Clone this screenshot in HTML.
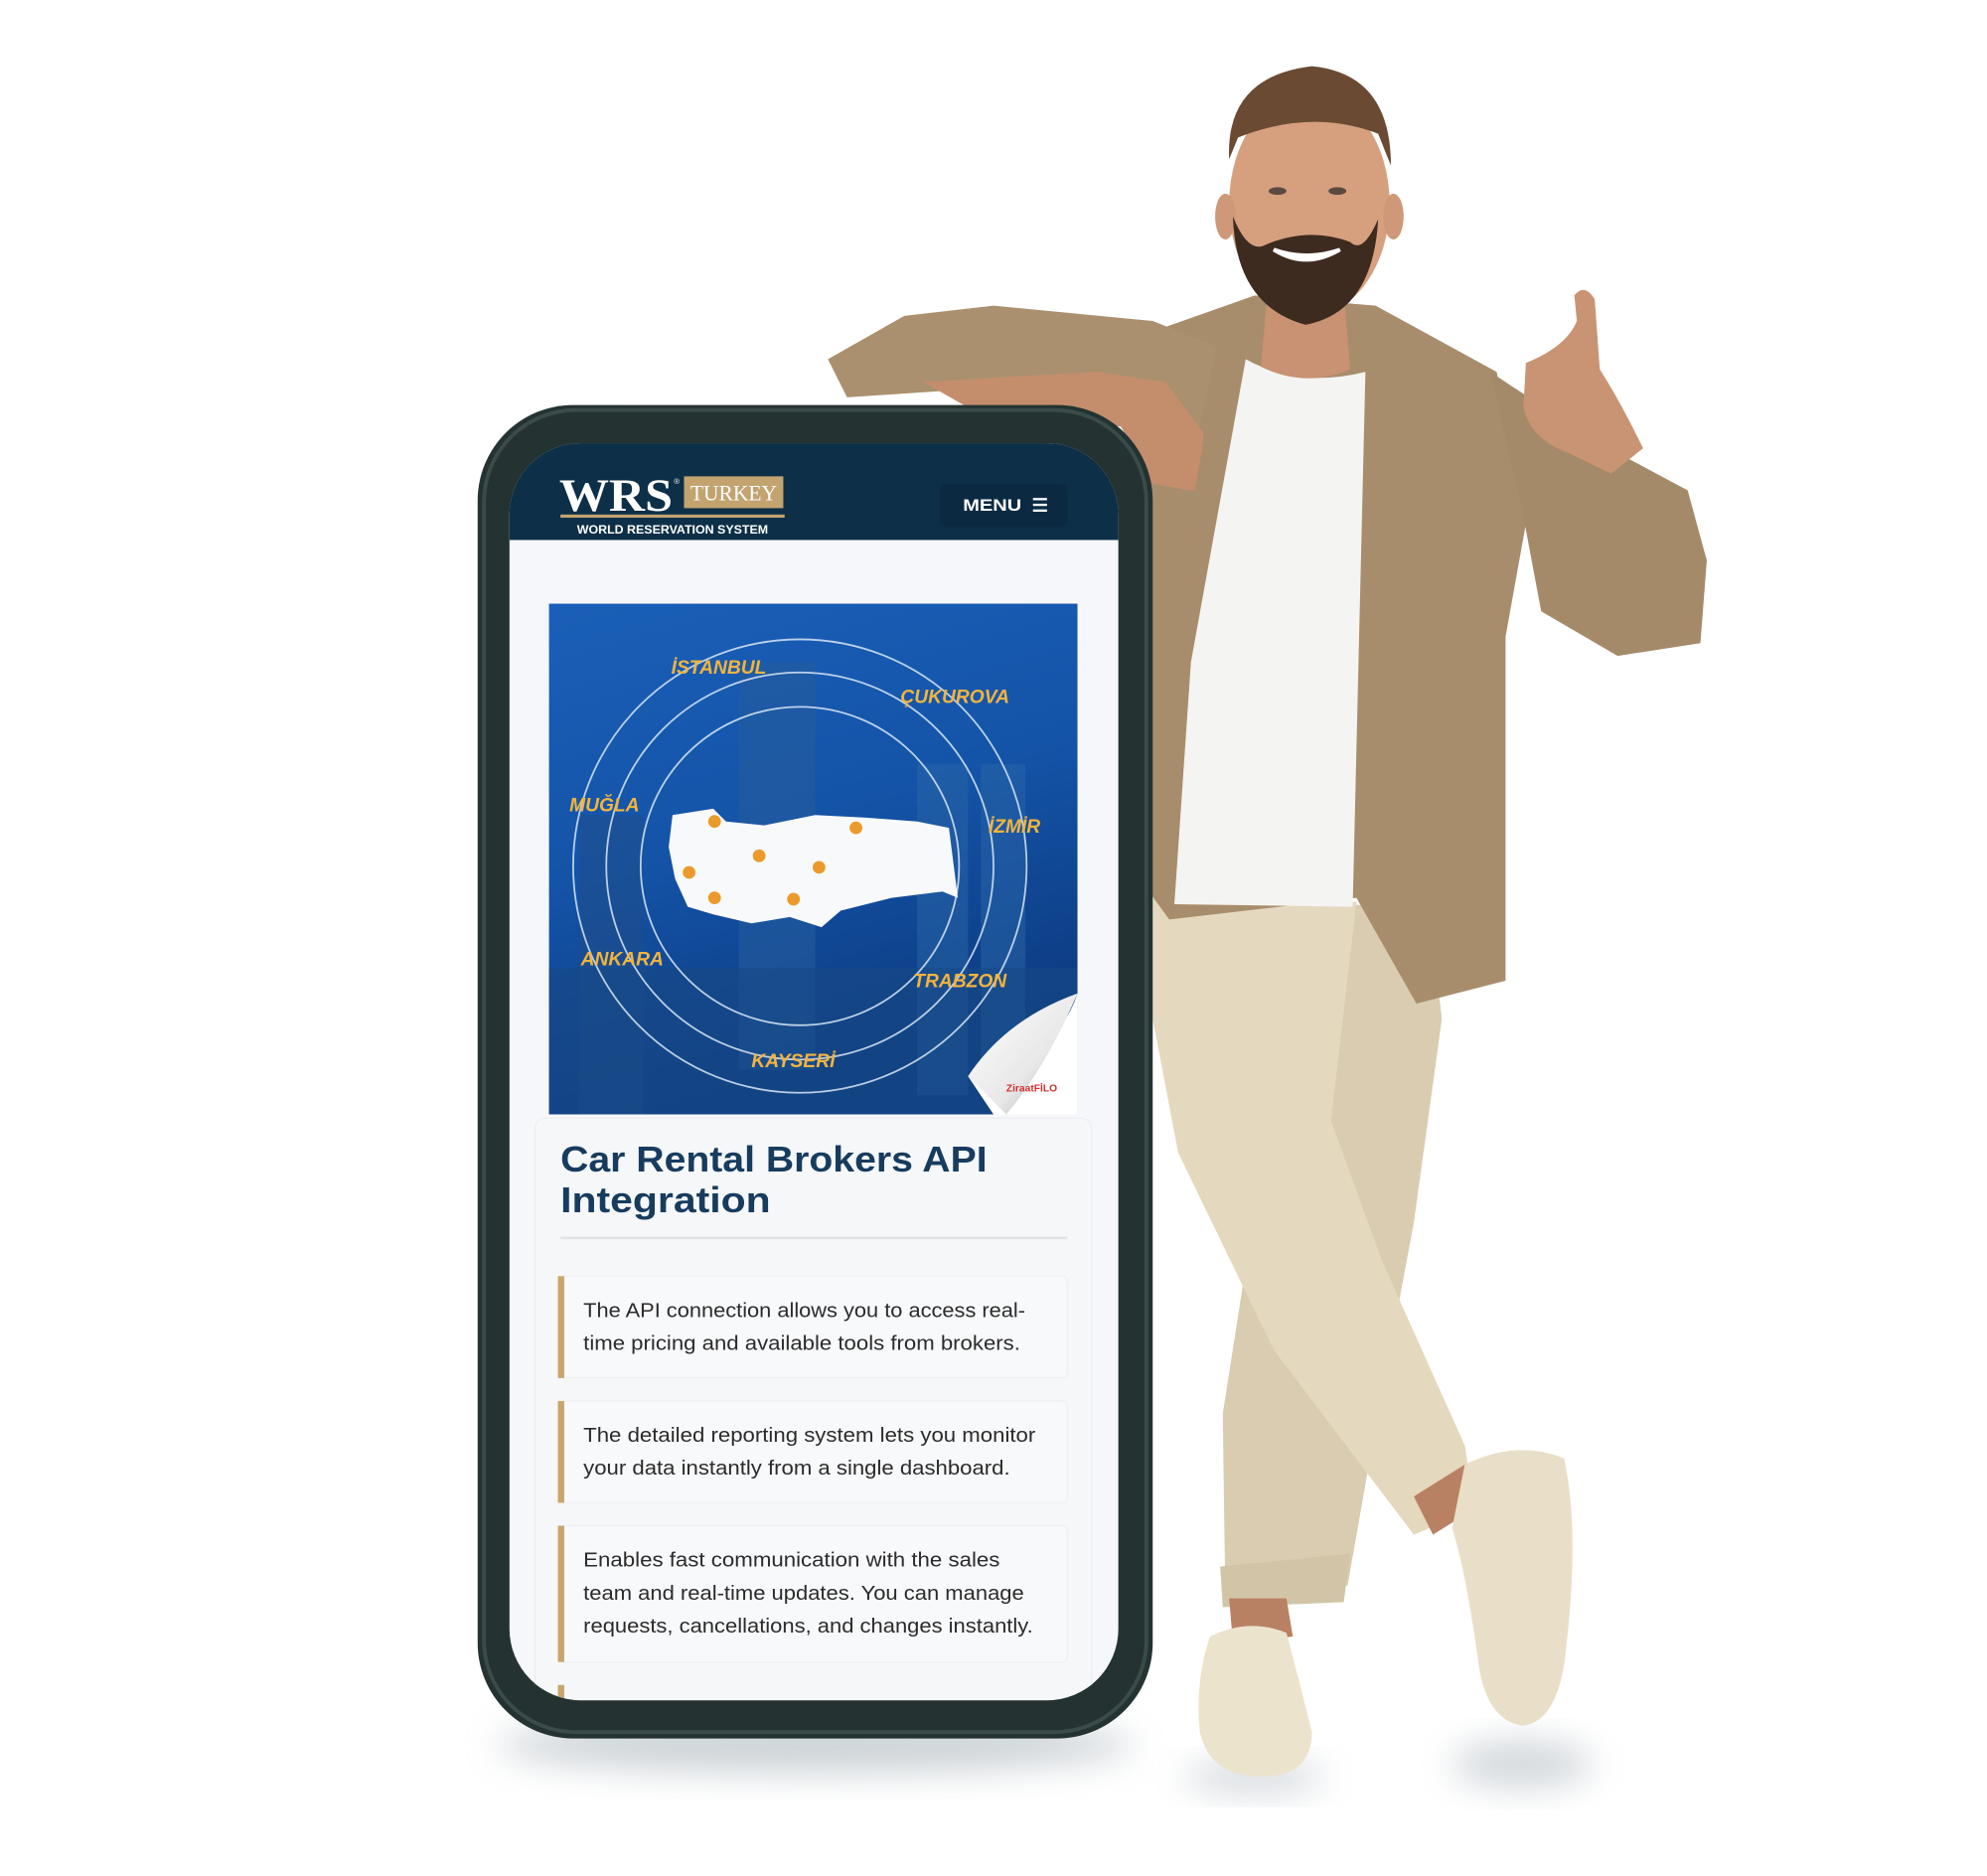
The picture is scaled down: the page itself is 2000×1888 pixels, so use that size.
<!DOCTYPE html>
<html><head><meta charset="utf-8"><style>
html,body{margin:0;padding:0;background:#fff;width:2000px;height:1888px;overflow:hidden}
svg{display:block}
</style></head><body>
<svg width="2000" height="1888" viewBox="0 0 1560 1473" preserveAspectRatio="none" xmlns="http://www.w3.org/2000/svg" font-family="Liberation Sans, sans-serif">
<defs>
<filter id="blur" x="-50%" y="-50%" width="200%" height="200%"><feGaussianBlur stdDeviation="14"/></filter>
<filter id="sblur"><feGaussianBlur stdDeviation="2"/></filter>
<linearGradient id="mapbg" x1="0" y1="0" x2="0.3" y2="1"><stop offset="0" stop-color="#1a5fb8"/><stop offset="0.5" stop-color="#1454a8"/><stop offset="1" stop-color="#0c3a80"/></linearGradient>
<linearGradient id="curl" x1="0" y1="0" x2="1" y2="1"><stop offset="0" stop-color="#ffffff"/><stop offset="0.6" stop-color="#e8e8e8"/><stop offset="1" stop-color="#9a9a9a"/></linearGradient>
<clipPath id="scr"><rect x="400" y="348" width="478" height="987" rx="56"/></clipPath>
<clipPath id="img"><rect x="431" y="474" width="415" height="401"/></clipPath>
</defs>

<!-- shadows -->
<ellipse cx="640" cy="1370" rx="250" ry="22" fill="#9aa6ae" opacity="0.5" filter="url(#blur)"/>
<ellipse cx="1195" cy="1385" rx="55" ry="18" fill="#9aa6b0" opacity="0.45" filter="url(#blur)"/>
<ellipse cx="985" cy="1395" rx="55" ry="12" fill="#9aa6b0" opacity="0.45" filter="url(#blur)"/>

<!-- MAN -->
<!-- pants -->
<path d="M1000 705 L1122 715 L1132 800 L1110 960 L1080 1120 L1058 1245 L962 1255 L960 1110 L985 950 Z" fill="#d9ccb0"/>
<path d="M905 705 L1065 708 L1045 880 L1085 990 L1150 1135 L1158 1185 L1110 1205 L1000 1060 L925 905 L905 800 Z" fill="#e4d8be"/>
<path d="M958 1230 L1060 1220 L1055 1258 L960 1262 Z" fill="#d2c4a6"/>
<!-- ankles -->
<path d="M965 1255 L1010 1255 L1015 1285 L968 1290 Z" fill="#b98163"/>
<path d="M1110 1175 L1150 1150 L1165 1180 L1125 1205 Z" fill="#b98163"/>
<!-- shoes -->
<path d="M950 1285 Q980 1270 1010 1282 Q1020 1320 1030 1360 Q1030 1395 990 1395 Q950 1395 942 1360 Q938 1320 950 1285 Z" fill="#ece3cd"/>
<path d="M1150 1150 Q1190 1130 1228 1145 Q1240 1200 1230 1290 Q1225 1352 1195 1355 Q1165 1350 1160 1300 Q1150 1230 1140 1200 Z" fill="#e9dfc8"/>
<!-- shirt torso -->
<path d="M900 262 L985 232 L1080 240 L1175 292 L1200 400 L1182 500 L1182 770 L1112 788 L1065 705 L918 722 L902 700 L898 420 Z" fill="#a88d6c"/>
<!-- t-shirt -->
<path d="M978 282 Q1020 305 1072 292 L1062 712 L922 710 L935 520 Z" fill="#f4f4f2"/>
<!-- right arm sleeve -->
<path d="M1170 292 L1250 345 L1325 385 L1340 440 L1335 505 L1270 515 L1210 480 L1195 400 Z" fill="#a58a69"/>
<!-- right hand -->
<path d="M1198 285 Q1230 272 1238 252 L1236 232 Q1244 222 1252 235 L1256 290 Q1272 315 1290 352 L1265 372 L1230 355 Q1202 345 1196 320 Z" fill="#c99473"/>
<!-- left arm sleeve -->
<path d="M650 282 L710 248 L780 240 L905 252 L955 272 L940 345 L900 322 L770 305 L665 312 Z" fill="#ab906f"/>
<!-- forearm/hand on phone -->
<path d="M725 300 L860 292 L915 300 L945 340 L935 385 L905 380 L880 335 L760 320 Z" fill="#c48e6d"/>
<!-- neck -->
<path d="M995 230 L1055 230 L1060 290 Q1025 305 990 288 Z" fill="#c99272"/>
<!-- head -->
<ellipse cx="1028" cy="160" rx="63" ry="88" fill="#d6a07f"/>
<ellipse cx="962" cy="170" rx="8" ry="18" fill="#cf9878"/>
<ellipse cx="1094" cy="170" rx="8" ry="18" fill="#cf9878"/>
<path d="M965 125 Q962 60 1030 52 Q1092 58 1092 130 L1082 105 Q1030 85 972 108 Z" fill="#6b4a33"/>
<path d="M968 170 Q970 240 1025 255 Q1078 245 1082 172 Q1070 200 1060 190 Q1028 178 994 192 Q980 200 968 170 Z" fill="#3e2b1f"/>
<path d="M1000 196 Q1025 212 1052 196 Q1026 205 1000 196 Z" fill="#fff" stroke="#fff" stroke-width="3"/>
<ellipse cx="1003" cy="150" rx="7" ry="3" fill="#5b4a3e"/>
<ellipse cx="1050" cy="150" rx="7" ry="3" fill="#5b4a3e"/>

<!-- PHONE -->
<rect x="375" y="318" width="530" height="1047" rx="75" fill="#243332"/>
<rect x="380" y="322" width="520" height="1038" rx="72" fill="none" stroke="#3a4b4a" stroke-width="3"/>
<rect x="400" y="348" width="478" height="987" rx="56" fill="#f6f7fa"/>
<g clip-path="url(#scr)">
<rect x="400" y="348" width="478" height="76" fill="#0d2f48"/>
<!-- logo -->
<text x="439" y="401" font-family="Liberation Serif, serif" font-weight="bold" font-size="36" fill="#fff" textLength="89" lengthAdjust="spacingAndGlyphs">WRS</text>
<text x="529" y="380" font-size="6" fill="#fff">®</text>
<rect x="537" y="374" width="78" height="25" fill="#c3a36f"/>
<text x="576" y="393" text-anchor="middle" font-family="Liberation Serif, serif" font-size="17" fill="#fff" textLength="68" lengthAdjust="spacingAndGlyphs">TURKEY</text>
<rect x="440" y="404" width="176" height="2.5" fill="#c3a36f"/>
<text x="528" y="419" text-anchor="middle" font-weight="bold" font-size="9" fill="#fff" textLength="150" lengthAdjust="spacingAndGlyphs">WORLD RESERVATION SYSTEM</text>
<rect x="738" y="380" width="100" height="34" rx="4" fill="#0b2a42"/>
<text x="756" y="401" font-weight="bold" font-size="13" fill="#fff" textLength="46" lengthAdjust="spacingAndGlyphs">MENU</text>
<rect x="811" y="391" width="11" height="1.8" fill="#fff"/><rect x="811" y="395.5" width="11" height="1.8" fill="#fff"/><rect x="811" y="400" width="11" height="1.8" fill="#fff"/>

<!-- map image -->
<g clip-path="url(#img)">
<rect x="431" y="474" width="415" height="401" fill="url(#mapbg)"/>
<rect x="580" y="520" width="60" height="320" fill="#245c9c" opacity="0.6"/>
<rect x="455" y="640" width="50" height="235" fill="#1e4f8c" opacity="0.6"/>
<rect x="720" y="600" width="40" height="260" fill="#2a65a8" opacity="0.5"/>
<rect x="770" y="600" width="35" height="260" fill="#2a65a8" opacity="0.5"/>
<rect x="431" y="760" width="415" height="115" fill="#174a86" opacity="0.6"/>
<g fill="none" stroke="#d9e6f5" stroke-width="1.4" opacity="0.85">
<circle cx="628" cy="680" r="178"/>
<circle cx="628" cy="680" r="152"/>
<circle cx="628" cy="680" r="125"/>
</g>
<path d="M528 640 L560 635 L570 645 L600 648 L640 640 L680 642 L720 645 L745 650 L752 705 L740 700 L700 705 L660 715 L645 728 L620 720 L590 725 L560 718 L540 712 L530 690 L525 665 Z" fill="#f7f9fb"/>
<g fill="#eb9b2c">
<circle cx="561" cy="645" r="5"/><circle cx="672" cy="650" r="5"/><circle cx="596" cy="672" r="5"/><circle cx="643" cy="681" r="5"/><circle cx="541" cy="685" r="5"/><circle cx="561" cy="705" r="5"/><circle cx="623" cy="706" r="5"/>
</g>
<g font-weight="bold" font-style="italic" font-size="15" fill="#f2b43e">
<text x="527" y="529">İSTANBUL</text>
<text x="707" y="552">ÇUKUROVA</text>
<text x="447" y="637">MUĞLA</text>
<text x="776" y="654">İZMİR</text>
<text x="456" y="758">ANKARA</text>
<text x="717" y="775">TRABZON</text>
<text x="590" y="838">KAYSERİ</text>
</g>
<path d="M846 780 Q830 830 760 845 L780 875 L846 875 Z" fill="#ffffff"/>
<path d="M760 845 Q790 800 846 780 Q820 840 790 875 Z" fill="url(#curl)"/>
<text x="790" y="857" font-size="8" fill="#d0312d" font-weight="bold">ZiraatFİLO</text>
</g>

<!-- card -->
<rect x="420" y="878" width="437" height="470" rx="8" fill="#f6f7f9" stroke="#eceef1"/>
<text x="440" y="920" font-weight="bold" font-size="28" fill="#173c5e" textLength="335" lengthAdjust="spacingAndGlyphs">Car Rental Brokers API</text>
<text x="440" y="952" font-weight="bold" font-size="28" fill="#173c5e" textLength="165" lengthAdjust="spacingAndGlyphs">Integration</text>
<rect x="440" y="971" width="398" height="2" fill="#e1e4e8"/>

<g font-size="16" fill="#2b2b2b">
<rect x="440" y="1002" width="398" height="80" rx="4" fill="#f8f9fb" stroke="#eef0f3"/>
<rect x="438" y="1002" width="5" height="80" fill="#c9a56d"/>
<text x="458" y="1034" textLength="347" lengthAdjust="spacingAndGlyphs">The API connection allows you to access real-</text>
<text x="458" y="1060" textLength="343" lengthAdjust="spacingAndGlyphs">time pricing and available tools from brokers.</text>

<rect x="440" y="1100" width="398" height="80" rx="4" fill="#f8f9fb" stroke="#eef0f3"/>
<rect x="438" y="1100" width="5" height="80" fill="#c9a56d"/>
<text x="458" y="1132" textLength="355" lengthAdjust="spacingAndGlyphs">The detailed reporting system lets you monitor</text>
<text x="458" y="1158" textLength="335" lengthAdjust="spacingAndGlyphs">your data instantly from a single dashboard.</text>

<rect x="440" y="1198" width="398" height="107" rx="4" fill="#f8f9fb" stroke="#eef0f3"/>
<rect x="438" y="1198" width="5" height="107" fill="#c9a56d"/>
<text x="458" y="1230" textLength="327" lengthAdjust="spacingAndGlyphs">Enables fast communication with the sales</text>
<text x="458" y="1256" textLength="346" lengthAdjust="spacingAndGlyphs">team and real-time updates. You can manage</text>
<text x="458" y="1282" textLength="353" lengthAdjust="spacingAndGlyphs">requests, cancellations, and changes instantly.</text>

<rect x="438" y="1323" width="5" height="30" fill="#c9a56d"/>
</g>
</g>

<!-- hand over phone edge -->
<path d="M880 330 Q905 325 925 335 L945 345 L938 385 L915 380 L900 355 Z" fill="#c48e6d"/>
</svg>
</body></html>
